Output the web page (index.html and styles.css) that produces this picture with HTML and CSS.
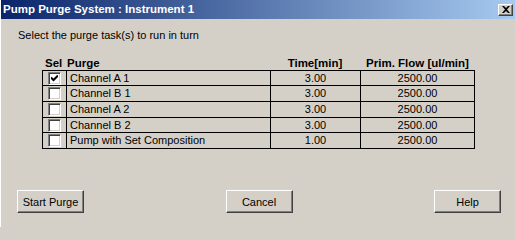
FILE: index.html
```html
<!DOCTYPE html>
<html>
<head>
<meta charset="utf-8">
<title>Pump Purge System : Instrument 1</title>
<link rel="stylesheet" href="styles.css">
</head>
<body>
<div class="window">
  <div class="titlebar">
    <span class="title">Pump Purge System : Instrument 1</span>
    <span class="close">
      <svg width="8" height="7" viewBox="0 0 8 7"><path d="M0 0h2l2 2 2-2h2L5 3.5 8 7H6L4 5 2 7H0l3-3.5z" fill="#000"/></svg>
    </span>
  </div>
  <div class="content">
    <div class="prompt">Select the purge task(s) to run in turn</div>
    <div class="head">
      <div class="h-sel">Sel</div>
      <div class="h-purge">Purge</div>
      <div class="h-num">Time[min]</div>
      <div class="h-num">Prim. Flow [ul/min]</div>
    </div>
    <div class="grid">
      <div class="cell c-sel"><span class="cb checked"><svg width="7" height="7" viewBox="0 0 7 7"><path d="M0 2.5l2.5 2.5L7 0.5" fill="none" stroke="#000" stroke-width="2"/></svg></span></div>
      <div class="cell c-name">Channel A 1</div>
      <div class="cell c-num">3.00</div>
      <div class="cell c-num">2500.00</div>

      <div class="cell c-sel"><span class="cb"></span></div>
      <div class="cell c-name">Channel B 1</div>
      <div class="cell c-num">3.00</div>
      <div class="cell c-num">2500.00</div>

      <div class="cell c-sel"><span class="cb"></span></div>
      <div class="cell c-name">Channel A 2</div>
      <div class="cell c-num">3.00</div>
      <div class="cell c-num">2500.00</div>

      <div class="cell c-sel"><span class="cb"></span></div>
      <div class="cell c-name">Channel B 2</div>
      <div class="cell c-num">3.00</div>
      <div class="cell c-num">2500.00</div>

      <div class="cell c-sel"><span class="cb"></span></div>
      <div class="cell c-name">Pump with Set Composition</div>
      <div class="cell c-num">1.00</div>
      <div class="cell c-num">2500.00</div>
    </div>
    <div class="buttons">
      <button class="btn">Start Purge</button>
      <button class="btn">Cancel</button>
      <button class="btn">Help</button>
    </div>
  </div>
</div>
</body>
</html>
```
FILE: styles.css
```css
html, body {
  margin: 0;
  padding: 0;
}
body {
  width: 515px;
  height: 227px;
  overflow: hidden;
  background: #d4d0c8;
  font-family: "Liberation Sans", Arial, sans-serif;
  font-size: 11px;
  color: #000;
}
.window {
  display: flex;
  flex-direction: column;
  height: 227px;
  box-sizing: border-box;
  border-left: 1px solid #fff;
}
.titlebar {
  height: 19px;
  display: flex;
  align-items: center;
  justify-content: space-between;
  background: linear-gradient(to right, #0a246a, #a6caf0);
  padding-left: 2px;
  padding-right: 2px;
}
.title {
  color: #fff;
  font-weight: bold;
  font-size: 11.5px;
  line-height: 19px;
}
.close {
  width: 15px;
  height: 12px;
  box-sizing: border-box;
  background: #d4d0c8;
  display: flex;
  align-items: center;
  justify-content: center;
  border-top: 1px solid #fff;
  border-left: 1px solid #fff;
  border-right: 1px solid #404040;
  border-bottom: 1px solid #404040;
  box-shadow: inset -1px -1px 0 #808080;
}
.content {
  display: flex;
  flex-direction: column;
}
.prompt {
  margin-top: 10px;
  margin-left: 17px;
  line-height: 13px;
  height: 13px;
}
.head {
  margin-top: 14px;
  margin-left: 41px;
  display: grid;
  grid-template-columns: 24px 204px 90px 115px;
  height: 14px;
  line-height: 14px;
  font-weight: bold;
  font-size: 11.5px;
}
.h-sel {
  padding-left: 3px;
}
.h-purge {
  padding-left: 1px;
}
.h-num {
  text-align: center;
}
.grid {
  margin-left: 41px;
  width: 433px;
  box-sizing: border-box;
  display: grid;
  grid-template-columns: 23px 203px 89px 113px;
  grid-template-rows: 14px 15px 15px 14px 15px;
  gap: 1px;
  padding: 1px;
  background: #000;
}
.cell {
  background: #d4d0c8;
  display: flex;
  align-items: center;
  line-height: 13px;
  overflow: hidden;
  white-space: nowrap;
}
.c-sel {
  justify-content: center;
}
.c-name {
  padding-left: 3px;
}
.c-num {
  justify-content: center;
}
.cb {
  width: 13px;
  height: 13px;
  box-sizing: border-box;
  background: #fff;
  border-top: 1px solid #808080;
  border-left: 1px solid #808080;
  border-right: 1px solid #fff;
  border-bottom: 1px solid #fff;
  box-shadow: inset 1px 1px 0 #404040, inset -1px -1px 0 #d4d0c8;
  display: flex;
  align-items: center;
  justify-content: center;
}
.buttons {
  margin-top: 41px;
  display: flex;
  justify-content: space-between;
  padding-left: 16px;
  padding-right: 14px;
}
.btn {
  width: 67px;
  height: 23px;
  box-sizing: border-box;
  margin: 0;
  padding: 0;
  font-family: "Liberation Sans", Arial, sans-serif;
  font-size: 11px;
  color: #000;
  background: #d4d0c8;
  border-top: 1px solid #fff;
  border-left: 1px solid #fff;
  border-right: 1px solid #404040;
  border-bottom: 1px solid #404040;
  box-shadow: inset -1px -1px 0 #808080;
}
```
